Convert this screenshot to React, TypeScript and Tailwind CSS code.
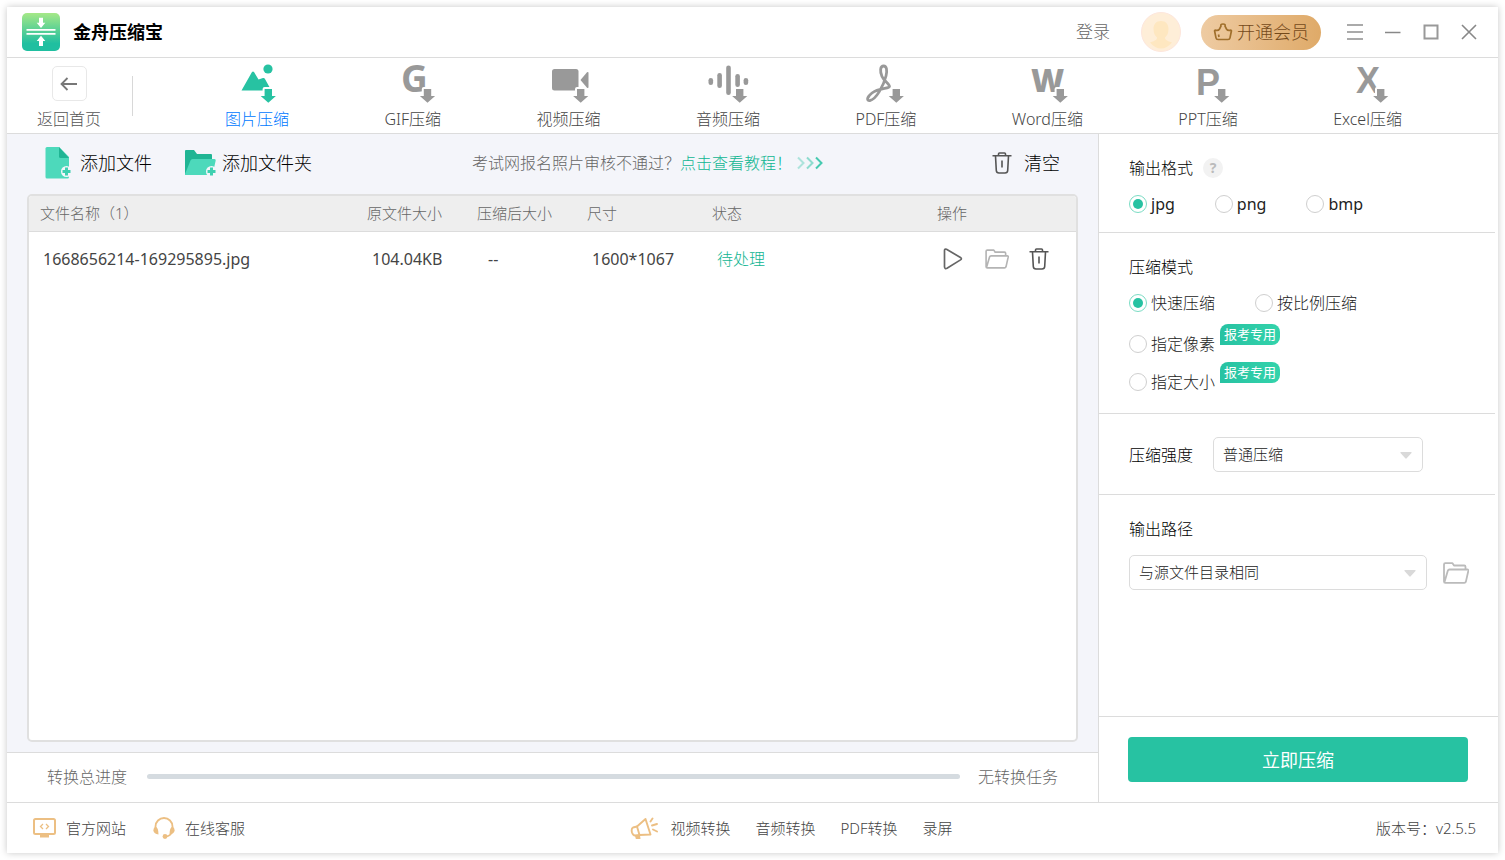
import * as React from "react";
import clsx from "clsx";

const DownArrow = ({ cx }: { cx: number }) => (
    <path
        transform={`translate(${cx} 0)`}
        d="M-3.700 25h7.400v7h3.900L0 38.800l-7.600-6.800h3.900z"
        fill="currentColor"
        stroke="#fff"
        strokeWidth="4"
        strokeLinejoin="round"
        paintOrder="stroke"
    />
);

const NAV_ITEMS = [
    {
        label: "图片压缩",
        arrow: 35.3,
        icon: (
            <>
                <circle cx="35" cy="5" r="4.600" />
                <path d="M8.500 26.500 19 8q1-1.200 2 0l4.500 7.500 4.500-1.500q1-.4 1.700.6L37 24v2.500z" />
            </>
        ),
    },
    {
        label: "GIF压缩",
        arrow: 38.5,
        icon: <text x="12" y="28" fontSize="37" fontWeight="700" fontFamily="Open Sans">G</text>,
    },
    {
        label: "视频压缩",
        arrow: 35.7,
        icon: (
            <>
                <rect x="7" y="5" width="26.500" height="21.500" rx="2.500" />
                <path d="M35.500 16 42 8.300q1.500-1 1.500.8v14q0 1.500-1.500.6z" />
            </>
        ),
    },
    {
        label: "音频压缩",
        arrow: 35.7,
        icon: (
            <>
                <rect x="4.500" y="14" width="4.600" height="7" rx="2.300" />
                <rect x="13.300" y="9" width="4.600" height="15" rx="2.300" />
                <rect x="22.200" y="1.500" width="4.600" height="29.500" rx="2.300" />
                <rect x="31.300" y="10" width="4.600" height="13" rx="2.300" />
                <rect x="39.600" y="14" width="4.600" height="7" rx="2.300" />
            </>
        ),
    },
    {
        label: "PDF压缩",
        arrow: 34.3,
        icon: (
            <path
                d="M21.700 2C18 2 17.800 7.500 20 12.500c2.200 5 7.500 7 7.500 10 0 2.200-11 1.500-17.500 6.500-5.500 4.200-5.500 8-2 7.500C14 35.500 21.500 22 24 12c1.500-6 .5-10-2.300-10z"
                fill="none"
                stroke="currentColor"
                strokeWidth="2.800"
            />
        ),
    },
    {
        label: "Word压缩",
        arrow: 37.3,
        icon: <text x="8" y="28" fontSize="32" fontWeight="800" fontFamily="Open Sans">W</text>,
    },
    {
        label: "PPT压缩",
        arrow: 37.7,
        icon: <text x="12" y="31" fontSize="36" fontWeight="700" fontFamily="Liberation Sans">P</text>,
    },
    {
        label: "Excel压缩",
        arrow: 36.7,
        icon: <text x="12" y="29" fontSize="36" fontWeight="700" fontFamily="Liberation Sans">X</text>,
    },
];

const FOOTER_TOOLS = ["视频转换", "音频转换", "PDF转换", "录屏"];

function TrashIcon({ className }: { className?: string }) {
    return (
        <svg viewBox="0 0 20 22" className={className} fill="none" stroke="currentColor" strokeWidth="1.600">
            <path d="M.5 3.800h19M6.500 3.500V2q0-1 1-1h5q1 0 1 1v1.500M3.500 4l.8 14.500Q4.500 21 7 21h6q2.500 0 2.700-2.500L16.500 4M10 8.500v7" />
        </svg>
    );
}

function FolderIcon({ className }: { className?: string }) {
    return (
        <svg viewBox="0 0 26 22" className={className} fill="none" stroke="currentColor" strokeWidth="1.800" strokeLinejoin="round">
            <path d="M22.500 7.500V4.800q0-1.300-1.300-1.300H11L9.500 1.200H2.300Q1 1.200 1 2.500v17q0 1.300 1.300 1.300h19q1.200 0 1.600-1.200L25.300 9q.3-1.500-1-1.500H6.500q-1.300 0-1.700 1.200L1.500 20" />
        </svg>
    );
}

function Radio({ name, label, defaultChecked }: { name: string; label: string; defaultChecked?: boolean }) {
    return (
        <label className="flex items-center gap-1 text-[#222]">
            <input
                type="radio"
                name={name}
                defaultChecked={defaultChecked}
                className="grid size-[18px] appearance-none place-content-center rounded-full border border-[#cfcfcf] bg-white checked:border-[#7bdcc4] checked:before:size-[10px] checked:before:rounded-full checked:before:bg-[#27c2a2] checked:before:content-['']"
            />
            {label}
        </label>
    );
}

function Select({ id, value, className }: { id: string; value: string; className?: string }) {
    return (
        <div className={clsx("relative", className)}>
            <select
                id={id}
                className="h-[35px] w-full appearance-none rounded-[5px] border border-[#dcdcdc] bg-white px-[9px] text-[15px] text-[#222]"
            >
                <option>{value}</option>
            </select>
            <svg viewBox="0 0 12 7" className="pointer-events-none absolute top-[15px] right-[11px] w-3 fill-[#d9d9d9]">
                <path d="M1 0h10q1 0 .5 1L6.700 6.300q-.7.700-1.400 0L.5 1Q0 0 1 0z" />
            </svg>
        </div>
    );
}

const Badge = () => (
    <span className="-mt-2 ml-[5px] h-[21px] self-start rounded-t-lg rounded-br-lg bg-linear-to-r from-[#27c2a2] to-[#33d3ab] px-1 text-[13px] leading-[21px] font-normal text-white">
        报考专用
    </span>
);

function TitleBar() {
    return (
        <header className="flex h-[51px] items-center border-b border-[#dcdcdc] pr-[21px] pl-[15px]">
            <svg viewBox="0 0 38 38" className="size-[38px]">
                <defs>
                    <linearGradient id="logo" x1="0" y1="0" x2="0" y2="1">
                        <stop offset="0" stopColor="#a5e887" />
                        <stop offset="0.800" stopColor="#20bfa0" />
                    </linearGradient>
                </defs>
                <rect width="38" height="38" rx="5" fill="url(#logo)" />
                <g fill="#fff">
                    <path d="M17 4.800h4v5h2.300L19 15l-4.300-5.200H17z" />
                    <path d="M4.500 16h29v1.800h-29zM4.500 20h29v1.800h-29z" />
                    <path d="M17 33h4v-5h2.300L19 22.800 14.700 28H17z" />
                </g>
            </svg>
            <h1 className="ml-[13px] text-lg font-bold text-black">金舟压缩宝</h1>
            <button className="ml-auto text-[17px] text-[#666]">登录</button>
            <svg viewBox="0 0 40 40" className="ml-[31px] size-10">
                <circle cx="20" cy="20" r="19.500" fill="#feeed8" stroke="#fde6dc" />
                <path d="M20 9c5 0 7.500 3.500 7.500 8 0 4-1.500 7-3.500 8.500 0 2 1 3 7 5q-5 6-11 6t-11-6c6-2 7-3 7-5-2-1.500-3.500-4.500-3.500-8.500 0-4.500 2.500-8 7.500-8z" fill="#fee7c0" />
            </svg>
            <button className="ml-5 flex h-[35px] items-center gap-1 rounded-full bg-linear-to-r from-[#eecba2] to-[#dfaa68] px-3 text-lg text-[#74491a]">
                <svg viewBox="0 0 20 18" className="w-5" fill="none" stroke="#a06f2c" strokeWidth="1.700" strokeLinejoin="round">
                    <path d="M2.500 7.200q2.800.8 4-1.200L8 3.200q-.8-2.200 2-2.200t2 2.200L13.500 6q1.200 2 4 1.200 1-.2.900.8L17 14.800q-.3 1.700-2 1.700H5q-1.700 0-2-1.700L1.600 8q-.1-1 .9-.8z" />
                    <path d="M5.500 11.500l.5 2.500" />
                </svg>
                开通会员
            </button>
            <div className="ml-[26px] flex items-center gap-[22px]">
                <button aria-label="菜单">
                    <svg viewBox="0 0 16 16" className="size-4" stroke="#aaa" strokeWidth="2"><path d="M0 1h16M0 8h16M0 15h16" /></svg>
                </button>
                <button aria-label="最小化">
                    <svg viewBox="0 0 16 16" className="size-4" stroke="#888" strokeWidth="1.500"><path d="M0 8.500h15.500" /></svg>
                </button>
                <button aria-label="最大化">
                    <svg viewBox="0 0 16 16" className="size-4" fill="none" stroke="#999" strokeWidth="2"><rect x="1.500" y="1.500" width="13" height="13" /></svg>
                </button>
                <button aria-label="关闭">
                    <svg viewBox="0 0 16 16" className="size-4" stroke="#888" strokeWidth="1.600"><path d="M1 1l14 14M15 1L1 15" /></svg>
                </button>
            </div>
        </header>
    );
}

function NavBar({ active, onSelect }: { active: number; onSelect: (index: number) => void }) {
    return (
        <nav className="flex h-[76px] border-b border-[#dcdcdc] pr-24 pl-[30px]">
            <button className="flex flex-col items-center pt-2 text-[#555]">
                <span className="grid size-[35px] place-items-center rounded-[5px] border border-[#e8e8e8]">
                    <svg viewBox="0 0 18 14" className="w-[18px]" fill="none" stroke="#777" strokeWidth="1.800">
                        <path d="M17 7H2M7.500 1l-6 6 6 6" />
                    </svg>
                </span>
                <span className="mt-[6px]">返回首页</span>
            </button>
            <div className="mt-[18px] ml-[31px] h-10 w-px bg-[#d8d8d8]" />
            <div className="flex flex-1 justify-between pt-1.5 pl-[92px]">
                {NAV_ITEMS.map((item, index) => (
                    <button
                        key={item.label}
                        onClick={() => onSelect(index)}
                        className="flex flex-col items-center gap-[3px]"
                    >
                        <svg
                            viewBox="0 0 48 40"
                            className={clsx(
                                "h-10 w-12 overflow-visible",
                                active === index ? "text-[#27c2a2]" : "text-[#999]"
                            )}
                            fill="currentColor"
                        >
                            {item.icon}
                            <DownArrow cx={item.arrow} />
                        </svg>
                        <span className={active === index ? "text-[#0078ff]" : "text-[#444]"}>{item.label}</span>
                    </button>
                ))}
            </div>
        </nav>
    );
}

function Toolbar() {
    return (
        <div className="flex h-[60px] items-center px-[38px] pb-0.5 text-lg text-black">
            <button className="flex items-center gap-[9px]">
                <svg viewBox="0 0 26 32" className="h-8 w-[26px]">
                    <path d="M2 0h12l10 10v20q0 1.500-1.500 1.500H2Q.5 31.500.5 30V1.500Q.5 0 2 0z" fill="#4dd9bb" />
                    <path d="M14 0l10 11h-8.500Q14 11 14 9.500z" fill="#20b594" />
                    <circle cx="21.500" cy="24.500" r="5.500" fill="#f4f5fa" />
                    <path d="M21.500 20.500v8M17.500 24.500h8" stroke="#3fd0b0" strokeWidth="3" />
                </svg>
                添加文件
            </button>
            <button className="ml-8 flex items-center gap-[5px]">
                <svg viewBox="0 0 33 28" className="h-7 w-[33px]">
                    <path d="M2 1h8l3 4h14q1 0 1 1v8L1 26V2q0-1 1-1z" fill="#20b594" />
                    <path d="M8.500 10h22q1.500 0 1.200 1.500L28.500 26H1.500Q.8 26 1 25L6.500 11.500Q7 10 8.500 10z" fill="#4dd9bb" />
                    <circle cx="27.500" cy="22.500" r="5.500" fill="#f4f5fa" />
                    <path d="M27.500 18.500v8M23.500 22.500h8" stroke="#3fd0b0" strokeWidth="3" />
                </svg>
                添加文件夹
            </button>
            <p className="ml-[160px] text-base text-[#666]">
                考试网报名照片审核不通过？<a href="#tutorial" className="text-[#10b592]">点击查看教程！</a>
            </p>
            <svg viewBox="0 0 26 14" className="ml-[5px] w-[26px]" fill="none" stroke="#27c2a2" strokeWidth="2">
                <path d="M1 1.500 6.500 7 1 12.500" opacity=".35" />
                <path d="M10 1.500 15.500 7 10 12.500" opacity=".5" />
                <path d="M19 1.500 24.500 7 19 12.500" opacity=".85" />
            </svg>
            <button className="ml-auto flex items-center gap-3">
                <TrashIcon className="h-[22px] w-5 text-[#555]" />
                清空
            </button>
        </div>
    );
}

function FileTable() {
    return (
        <div className="mx-5 mb-[10px] flex-1 overflow-hidden rounded-[5px] border-2 border-[#e0e0e0] bg-white">
            <table className="w-full table-fixed text-left">
                <colgroup>
                    <col />
                    <col className="w-[110px]" />
                    <col className="w-[110px]" />
                    <col className="w-[125px]" />
                    <col className="w-[225px]" />
                    <col className="w-[150px]" />
                </colgroup>
                <thead>
                    <tr className="h-[35px] border-b border-[#dcdcdc] bg-[#eee] text-[15px] text-[#666] [&>th]:pl-[11px] [&>th]:font-light">
                        <th>文件名称（1）</th>
                        <th>原文件大小</th>
                        <th>压缩后大小</th>
                        <th>尺寸</th>
                        <th>状态</th>
                        <th>操作</th>
                    </tr>
                </thead>
                <tbody>
                    <tr className="h-14 font-normal text-[#444]">
                        <td className="pl-[14px]">1668656214-169295895.jpg</td>
                        <td className="pl-4">104.04KB</td>
                        <td className="pl-[22px]">--</td>
                        <td className="pl-4">1600*1067</td>
                        <td className="pl-4 font-light text-[#10b592]">待处理</td>
                        <td className="pl-[17px]">
                            <div className="flex items-center">
                                <button aria-label="开始">
                                    <svg viewBox="0 0 20 22" className="h-[22px] w-5" fill="none" stroke="#666" strokeWidth="1.700" strokeLinejoin="round">
                                        <path d="M1.500 2.500q0-2 2-1.200L17.500 9.500q1.800 1.200 0 2.400L4 20.300q-2.200 1-2.500-1.300z" />
                                    </svg>
                                </button>
                                <button aria-label="打开文件夹" className="ml-[22px]">
                                    <FolderIcon className="h-5 w-6 text-[#b4b4b4]" />
                                </button>
                                <button aria-label="删除" className="ml-5">
                                    <TrashIcon className="h-[22px] w-5 text-[#555]" />
                                </button>
                            </div>
                        </td>
                    </tr>
                </tbody>
            </table>
        </div>
    );
}

function SettingsPanel() {
    return (
        <aside className="flex w-[400px] flex-col border-l border-[#dcdcdc]">
            <section className="mr-[3px] border-b border-[#dcdcdc] px-[30px] pt-[22px] pb-4">
                <div className="flex items-center gap-[10px] text-black">
                    <h2>输出格式</h2>
                    <button className="size-5 rounded-full bg-[#f2f2f2] text-sm leading-5 font-bold text-[#bbb]">?</button>
                </div>
                <div className="mt-3 flex gap-10 font-normal">
                    <Radio name="format" label="jpg" defaultChecked />
                    <Radio name="format" label="png" />
                    <Radio name="format" label="bmp" />
                </div>
            </section>
            <section className="mr-[3px] border-b border-[#dcdcdc] px-[30px] pt-[22px] pb-[19px]">
                <h2 className="text-black">压缩模式</h2>
                <div className="mt-3 flex gap-10">
                    <Radio name="mode" label="快速压缩" defaultChecked />
                    <Radio name="mode" label="按比例压缩" />
                </div>
                <div className="mt-[17px] flex">
                    <Radio name="mode" label="指定像素" />
                    <Badge />
                </div>
                <div className="mt-[14px] flex">
                    <Radio name="mode" label="指定大小" />
                    <Badge />
                </div>
            </section>
            <section className="mr-[3px] flex items-center gap-5 border-b border-[#dcdcdc] px-[30px] pt-[23px] pb-[22px]">
                <label htmlFor="strength" className="text-black">压缩强度</label>
                <Select id="strength" value="普通压缩" className="w-[210px]" />
            </section>
            <section className="flex-1 pt-[22px] pr-[29px] pl-[30px]">
                <label htmlFor="path" className="text-black">输出路径</label>
                <div className="mt-[14px] flex items-center gap-4">
                    <Select id="path" value="与源文件目录相同" className="flex-1" />
                    <button aria-label="选择文件夹">
                        <FolderIcon className="h-[22px] w-[26px] text-[#bbb]" />
                    </button>
                </div>
            </section>
            <div className="border-t border-[#dcdcdc] py-5 pr-[30px] pl-[29px]">
                <button className="h-[45px] w-full rounded-[4px] bg-[#27c2a2] text-lg font-normal text-white">立即压缩</button>
            </div>
        </aside>
    );
}

function Footer() {
    return (
        <footer className="flex h-[51px] items-center border-t border-[#dcdcdc] pr-[22px] pl-[26px] text-[15px] text-[#444]">
            <div className="flex flex-1 items-center">
                <a href="#site" className="flex items-center gap-[10px]">
                    <svg viewBox="0 0 23 20" className="h-5 w-[23px]" fill="none" stroke="#ecbf83" strokeWidth="2">
                        <rect x="1" y="1" width="21" height="15" rx="1.500" />
                        <path d="M8 18.500h7v-2H8z" fill="#ecbf83" />
                        <path d="M10 6 7.500 8.500 10 11M13 6l2.500 2.500L13 11" strokeWidth="1.300" />
                    </svg>
                    官方网站
                </a>
                <a href="#support" className="ml-[27px] flex items-center gap-[10px]">
                    <svg viewBox="0 0 22 22" className="size-[22px]" fill="none" stroke="#ecbf83" strokeWidth="1.800">
                        <path d="M2.500 11V9.500a8.500 8.500 0 0 1 17 0V11M19 15q-1.500 4-6 4.500" />
                        <path d="M2.500 9.500q3 1 3 8-4.500-.5-5.200-4Q.3 11 2.500 9.500zM19.500 9.500q-3 1-3 8 4.500-.5 5.200-4 0-2.500-2.200-4z" fill="#ecbf83" stroke="none" />
                        <circle cx="12" cy="19.500" r="2.400" fill="#ecbf83" stroke="none" />
                    </svg>
                    在线客服
                </a>
            </div>
            <div className="flex items-center gap-[25px] pl-[74px]">
                <a href="#video" className="flex items-center gap-3">
                    <svg viewBox="0 0 28 22" className="h-[22px] w-7" fill="none" stroke="#ecbf83" strokeWidth="1.900" strokeLinecap="round" strokeLinejoin="round">
                        <path d="M7 9.500 15.500 2l5 15.500L9.500 18 5 18.500Q3 18.500 2 15.500q-1-4 1-5z" />
                        <path d="M7 9.500 9.500 18M6 19l.7 2.500h2.800L9 18.500" fill="#ecbf83" />
                        <path d="M20.500 4.500 22.500 1.500M22 8.500 27 7M23 12.500l4 2" />
                    </svg>
                    {FOOTER_TOOLS[0]}
                </a>
                {FOOTER_TOOLS.slice(1).map((tool) => (
                    <a key={tool} href="#tool">{tool}</a>
                ))}
            </div>
            <div className="flex-1 text-right">版本号：v2.5.5</div>
        </footer>
    );
}

export default function App() {
    const [active, setActive] = React.useState(0);

    return (
        <div className="flex min-h-screen bg-white p-[7px] font-['Noto_Sans','Noto_Sans_CJK_SC',sans-serif] text-base font-light">
            <div className="flex flex-1 flex-col bg-white shadow-[0_0_7px_rgba(0,0,0,0.22)]">
                <TitleBar />
                <NavBar active={active} onSelect={setActive} />
                <main className="flex flex-1">
                    <div className="flex flex-1 flex-col bg-[#f4f5fa]">
                        <Toolbar />
                        <FileTable />
                        <div className="flex h-[50px] items-center border-t border-[#dcdcdc] bg-white px-10 pb-0.5 text-[#666]">
                            <span>转换总进度</span>
                            <div className="mr-[18px] ml-5 h-[5px] flex-1 rounded-full bg-[#d5dbe0]" />
                            <span>无转换任务</span>
                        </div>
                    </div>
                    <SettingsPanel />
                </main>
                <Footer />
            </div>
        </div>
    );
}
